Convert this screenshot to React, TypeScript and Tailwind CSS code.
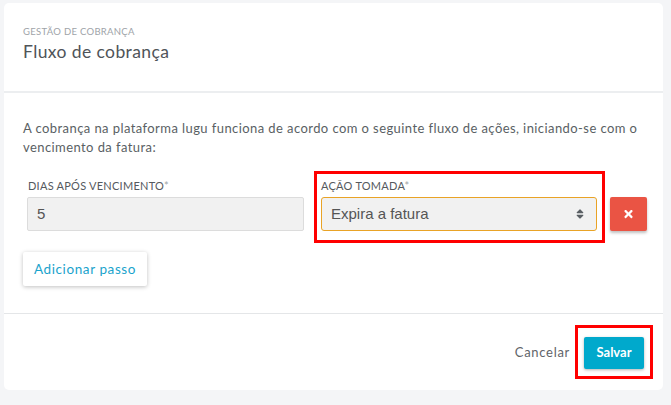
import { FaTimes, FaSort } from "react-icons/fa";

const App = () => {
    return (
        <div className="min-h-[405px] bg-[#f4f5f7] pt-[3px] pl-[4px] pr-[8px] pb-[15px]" style={{ fontFamily: "Lato, 'Open Sans', sans-serif" }}>
            <div className="bg-white rounded-[5px] w-[659px]">
                {/* header */}
                <div className="pt-[23px] pb-[28px] pl-[19px] border-b-2 border-[#eceef0]">
                    <div className="text-[9.5px] leading-[12px] uppercase text-[#9ea3a8] tracking-[0.3px]">Gestão de cobrança</div>
                    <div className="text-[17.5px] leading-[22px] text-[#4f5459] mt-[3px] tracking-[0.4px]">Fluxo de cobrança</div>
                </div>

                {/* body */}
                <div className="pt-[26px] pb-[27px] pl-[19px] pr-[16px] border-b border-[#e4e6e8]">
                    <p className="text-[13px] leading-[19px] text-[#5a5f64] tracking-[0.42px] whitespace-nowrap">
                        A cobrança na plataforma lugu funciona de acordo com o seguinte fluxo de ações, iniciando-se com o
                        <br />
                        vencimento da fatura:
                    </p>

                    <div className="flex items-end mt-[22px] pl-[4px]">
                        <div className="w-[277px]">
                            <label className="block text-[11px] leading-[14px] uppercase text-[#55595e] pl-[1px] tracking-[0.25px]">
                                Dias após vencimento<span className="text-[#a0a4a8]">*</span>
                            </label>
                            <div className="mt-[4px] h-[34px] bg-[#f1f1f1] border border-[#dcdcdc] rounded-[2px] flex items-center pl-[9px] text-[15px] text-[#555]" style={{ fontFamily: "'Liberation Sans', Arial, sans-serif" }}>
                                5
                            </div>
                        </div>

                        <div className="relative ml-[17px] w-[276px]">
                            <div className="absolute left-[-7px] right-[-8px] top-[-8px] bottom-[-12px] border-[3px] border-[#ff0000] pointer-events-none" />
                            <label className="block text-[11px] leading-[14px] uppercase text-[#55595e] tracking-[0.25px]">
                                Ação tomada<span className="text-[#a0a4a8]">*</span>
                            </label>
                            <div className="mt-[4px] h-[34px] bg-[#f1f1f1] border border-[#e9a326] rounded-[3px] flex items-center justify-between pl-[9px] pr-[11px] text-[15px] text-[#555]" style={{ fontFamily: "'Liberation Sans', Arial, sans-serif" }}>
                                <span>Expira a fatura</span>
                                <FaSort className="text-[#5a5f64] w-[10px] h-[12px]" />
                            </div>
                        </div>

                        <button className="ml-[13px] w-[37px] h-[34px] bg-[#ea5444] rounded-[2px] flex items-center justify-center shadow-[0_2px_3px_rgba(0,0,0,0.25)]">
                            <FaTimes className="text-white w-[11px] h-[12px]" />
                        </button>
                    </div>

                    <button className="mt-[21px] h-[34px] w-[124px] bg-white rounded-[2px] text-[13.5px] text-[#1aa3cc] tracking-[0.6px] shadow-[0_1px_4px_rgba(0,0,0,0.25)]">
                        Adicionar passo
                    </button>
                </div>

                {/* footer */}
                <div className="pt-[23px] pb-[21px] pr-[19px] flex items-center justify-end">
                    <span className="text-[13px] text-[#5f6469] tracking-[0.7px] mr-[14px]">Cancelar</span>
                    <div className="relative">
                        <div className="absolute left-[-9px] right-[-9px] top-[-12px] bottom-[-10px] border-[3px] border-[#ff0000] pointer-events-none" />
                        <button className="h-[32px] w-[60px] bg-[#00a9cc] rounded-[2px] text-white text-[13px] font-bold shadow-[0_1px_3px_rgba(0,0,0,0.3)]">
                            Salvar
                        </button>
                    </div>
                </div>
            </div>
        </div>
    )
}

export default App
